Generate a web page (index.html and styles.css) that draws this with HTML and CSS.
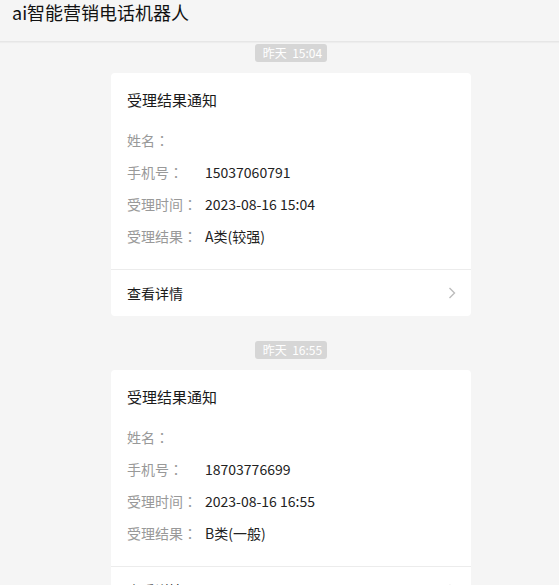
FILE: index.html
```html
<!DOCTYPE html>
<html>
	<head>
		<meta charset="UTF-8">
		<title>ai智能营销电话机器人</title>
		<meta name="viewport" content="width=device-width, initial-scale=1.0">
		<link rel="stylesheet" href="styles.css">
	</head>
	<body>
		<header class="top">
			<h1 class="top-title">ai智能营销电话机器人</h1>
		</header>

		<div class="list">
			<div class="item">
				<div class="time"><span>昨天&nbsp;&nbsp;15:04</span></div>
				<div class="card">
					<div class="card-body">
						<div class="card-title">受理结果通知</div>
						<ul class="rows">
							<li><span class="label">姓名<i>：</i></span><span class="value"></span></li>
							<li><span class="label">手机号<i>：</i></span><span class="value">15037060791</span></li>
							<li><span class="label">受理时间<i>：</i></span><span class="value">2023-08-16 15:04</span></li>
							<li><span class="label">受理结果<i>：</i></span><span class="value">A类(较强)</span></li>
						</ul>
					</div>
					<a class="more" href="#">
						<span>查看详情</span>
						<svg width="8" height="12" viewBox="0 0 8 12"><polyline points="1.5,1 6.5,6 1.5,11" fill="none" stroke="#bcbcbc" stroke-width="1.4"/></svg>
					</a>
				</div>
			</div>

			<div class="item">
				<div class="time"><span>昨天&nbsp;&nbsp;16:55</span></div>
				<div class="card">
					<div class="card-body">
						<div class="card-title">受理结果通知</div>
						<ul class="rows">
							<li><span class="label">姓名<i>：</i></span><span class="value"></span></li>
							<li><span class="label">手机号<i>：</i></span><span class="value">18703776699</span></li>
							<li><span class="label">受理时间<i>：</i></span><span class="value">2023-08-16 16:55</span></li>
							<li><span class="label">受理结果<i>：</i></span><span class="value">B类(一般)</span></li>
						</ul>
					</div>
					<a class="more" href="#">
						<span>查看详情</span>
						<svg width="8" height="12" viewBox="0 0 8 12"><polyline points="1.5,1 6.5,6 1.5,11" fill="none" stroke="#bcbcbc" stroke-width="1.4"/></svg>
					</a>
				</div>
			</div>
		</div>
	</body>
</html>
```

FILE: styles.css
```css
*{
	margin: 0;
	padding: 0;
	box-sizing: border-box;
}
body{
	background: #f5f5f5;
	font-family: "Noto Sans CJK SC", "Noto Sans", sans-serif;
	color: #222;
	overflow: hidden;
}
.top{
	height: 42px;
	border-bottom: 1px solid #e6e6e6;
	box-shadow: 0 1px 1px rgba(0,0,0,0.03);
	padding-left: 12px;
}
.top-title{
	font-size: 18px;
	font-weight: normal;
	line-height: 24px;
	color: #111;
}
.list{
	padding: 2px 0 0 23px;
	display: flex;
	flex-direction: column;
	align-items: center;
}
.item{
	width: 360px;
	margin-bottom: 25px;
}
.time{
	display: flex;
	justify-content: center;
	margin-bottom: 11px;
}
.time span{
	background: #d6d6d6;
	color: #fff;
	font-size: 12px;
	line-height: 18px;
	height: 18px;
	padding: 0 5px 0 8px;
	border-radius: 3px;
}
.card{
	background: #fff;
	border-radius: 4px;
}
.card-body{
	padding: 15px 16px 17px;
}
.card-title{
	font-size: 15px;
	line-height: 24px;
	color: #1a1a1a;
}
.rows{
	list-style: none;
	margin-top: 12px;
}
.rows li{
	display: flex;
	font-size: 14px;
	line-height: 32px;
	height: 32px;
}
.label{
	width: 78px;
	color: #999;
}
.label i{
	font-style: normal;
	font-family: "Noto Sans CJK TC", sans-serif;
}
.value{
	color: #222;
}
.more{
	display: flex;
	align-items: center;
	justify-content: space-between;
	height: 47px;
	border-top: 1px solid #ececec;
	padding: 0 15px 0 16px;
	text-decoration: none;
	color: #1a1a1a;
	font-size: 14px;
}
```
